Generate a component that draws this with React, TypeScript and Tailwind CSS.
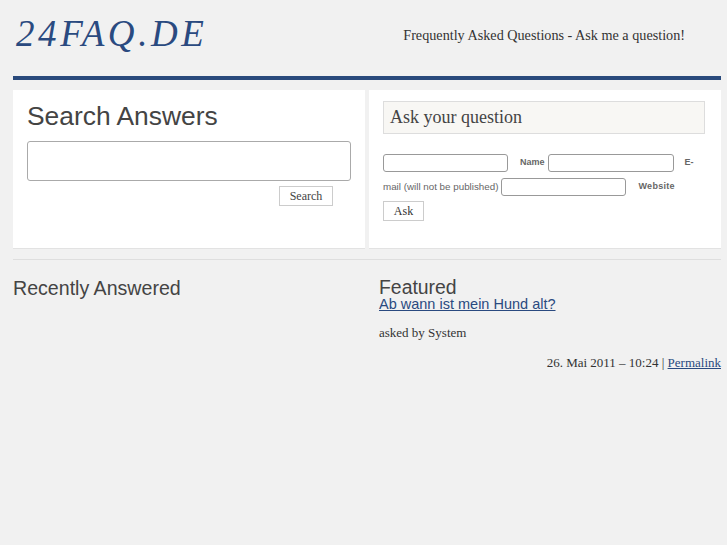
import React from "react";

const serif = { fontFamily: '"Liberation Serif", "Times New Roman", serif' };

export default function App() {
  return (
    <div className="min-h-[545px] w-full bg-[#f1f1f1] text-[#333]" style={{ fontFamily: '"Liberation Sans", Arial, sans-serif' }}>
      <div className="pl-[13px] pr-[6px]">
        <header className="flex h-[76px] items-start">
          <div className="mt-[12px] ml-[3px] text-[37px] italic tracking-[3.6px] text-[#2a4a80] leading-[44px]" style={serif}>
            24FAQ.DE
          </div>
          <div className="ml-auto mr-[36px] mt-[25px] text-[14.2px] text-[#333]" style={serif}>
            Frequently Asked Questions - Ask me a question!
          </div>
        </header>
        <div className="h-[4px] bg-[#2a4a7c]" />
        <div className="mt-[10px] flex gap-[4px]">
          <section className="h-[159px] w-[352px] bg-white border-b border-[#e2e2e2] px-[14px] pt-[10px]">
            <h2 className="text-[26.4px] leading-[32px] text-[#444]">Search Answers</h2>
            <div className="mt-[9px] h-[40px] w-[324px] rounded-[3px] border border-[#aaa] bg-white" />
            <div className="flex justify-end pr-[18px] mt-[5px]">
              <button className="h-[20px] w-[54px] border border-[#ccc] bg-white text-[12px] text-[#444]" style={serif}>Search</button>
            </div>
          </section>
          <section className="h-[159px] w-[352px] bg-white border-b border-[#e2e2e2] px-[14px] pt-[11px]">
            <div className="h-[33px] w-[322px] border border-[#ddd] bg-[#f8f7f4] pl-[6px] text-[18px] leading-[31px] text-[#444]" style={serif}>
              Ask your question
            </div>
            <div className="mt-[20px] flex items-center text-[9px] text-[#666]">
              <div className="h-[18px] w-[125px] rounded-[3px] border border-[#999]" />
              <span className="ml-[12px] mr-[3px] font-bold">Name</span>
              <div className="h-[18px] w-[126px] rounded-[3px] border border-[#999]" />
              <span className="ml-[11px] font-bold">E-</span>
            </div>
            <div className="mt-[6px] flex items-center text-[9.8px] text-[#666]">
              <span>mail (will not be published)</span>
              <div className="ml-[3px] h-[18px] w-[125px] rounded-[3px] border border-[#999]" />
              <span className="ml-[12px] text-[9px] font-bold tracking-[0.3px]">Website</span>
            </div>
            <button className="mt-[5px] h-[20px] w-[41px] border border-[#ccc] bg-white text-[12px] text-[#333]" style={serif}>Ask</button>
          </section>
        </div>
        <div className="mt-[10px] h-px bg-[#dedede]" />
        <div className="mt-[17px] flex">
          <div className="w-[366px]">
            <h3 className="text-[19.6px] leading-[22px] text-[#444]">Recently Answered</h3>
          </div>
          <div className="flex-1">
            <h3 className="text-[19.4px] leading-[20px] text-[#444]">Featured</h3>
            <a href="#" className="block -mt-[1px] text-[14.5px] leading-[16px] text-[#2a4a80] underline">Ab wann ist mein Hund alt?</a>
            <p className="mt-[11px] text-[13px] text-[#333]" style={serif}>asked by System</p>
            <p className="mt-[10px] text-right text-[13px] text-[#333]" style={serif}>
              26. Mai 2011 – 10:24 | <a href="#" className="text-[#2a4a80] underline">Permalink</a>
            </p>
          </div>
        </div>
      </div>
    </div>
  );
}
